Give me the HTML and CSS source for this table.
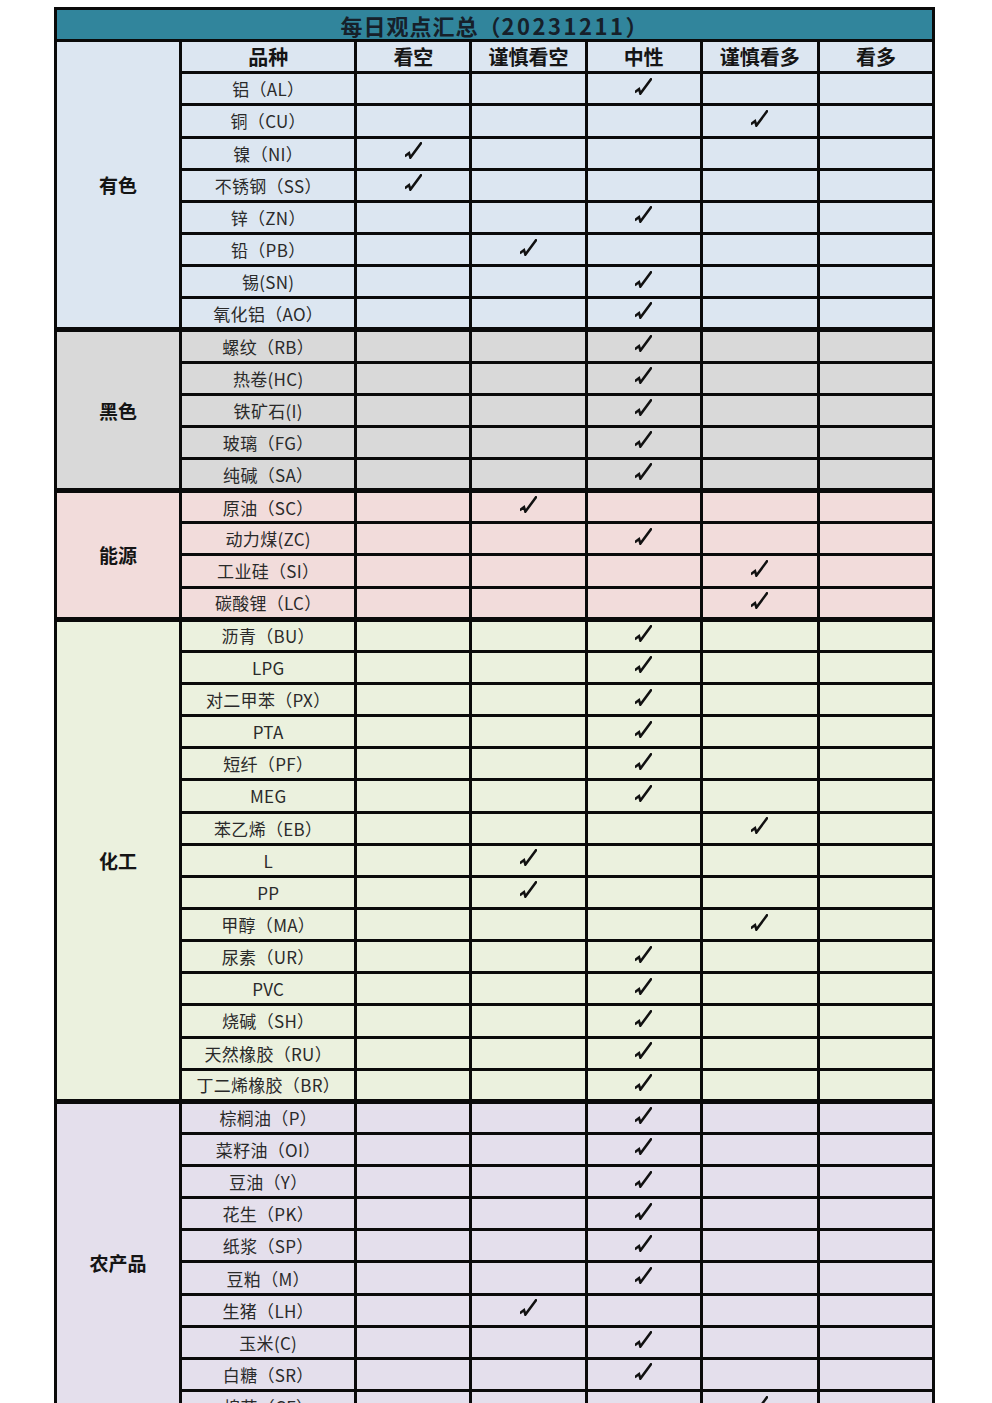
FILE: index.html
```html
<!DOCTYPE html>
<html lang="zh-CN">
<head>
<meta charset="utf-8">
<title>每日观点汇总</title>
<link rel="stylesheet" href="styles.css">
</head>
<body>
<svg class="defs" width="0" height="0" aria-hidden="true">
  <symbol id="tick" viewBox="0 0 17 17">
    <path d="M0.8 13.4 L4 11 L5.4 15.6 L16 1.2" fill="none" stroke="#111" stroke-width="2.5" stroke-linejoin="miter" stroke-linecap="square"/>
  </symbol>
</svg>
<div class="page">
<table class="sheet">
  <colgroup>
    <col class="c-group"><col class="c-name"><col class="c-v"><col class="c-v"><col class="c-v"><col class="c-v2"><col class="c-v">
  </colgroup>
  <tr class="title-row"><td colspan="7" class="title">每日观点汇总（<span class="date">20231211</span>）</td></tr>
  <tr class="head metal">
    <td rowspan="9" class="group">有色</td>
    <td class="th">品种</td><td class="th">看空</td><td class="th">谨慎看空</td><td class="th">中性</td><td class="th">谨慎看多</td><td class="th">看多</td>
  </tr>
  <tr class="metal"><td class="name">铝（AL）</td><td></td><td></td><td class="ck"><svg class="tk"><use href="#tick"/></svg></td><td></td><td></td></tr>
  <tr class="metal"><td class="name">铜（CU）</td><td></td><td></td><td></td><td class="ck"><svg class="tk"><use href="#tick"/></svg></td><td></td></tr>
  <tr class="metal"><td class="name">镍（NI）</td><td class="ck"><svg class="tk"><use href="#tick"/></svg></td><td></td><td></td><td></td><td></td></tr>
  <tr class="metal"><td class="name">不锈钢（SS）</td><td class="ck"><svg class="tk"><use href="#tick"/></svg></td><td></td><td></td><td></td><td></td></tr>
  <tr class="metal"><td class="name">锌（ZN）</td><td></td><td></td><td class="ck"><svg class="tk"><use href="#tick"/></svg></td><td></td><td></td></tr>
  <tr class="metal"><td class="name">铅（PB）</td><td></td><td class="ck"><svg class="tk"><use href="#tick"/></svg></td><td></td><td></td><td></td></tr>
  <tr class="metal"><td class="name">锡(SN)</td><td></td><td></td><td class="ck"><svg class="tk"><use href="#tick"/></svg></td><td></td><td></td></tr>
  <tr class="metal"><td class="name">氧化铝（AO）</td><td></td><td></td><td class="ck"><svg class="tk"><use href="#tick"/></svg></td><td></td><td></td></tr>

  <tr class="ferrous first"><td rowspan="5" class="group">黑色</td><td class="name">螺纹（RB）</td><td></td><td></td><td class="ck"><svg class="tk"><use href="#tick"/></svg></td><td></td><td></td></tr>
  <tr class="ferrous"><td class="name">热卷(HC)</td><td></td><td></td><td class="ck"><svg class="tk"><use href="#tick"/></svg></td><td></td><td></td></tr>
  <tr class="ferrous"><td class="name">铁矿石(I)</td><td></td><td></td><td class="ck"><svg class="tk"><use href="#tick"/></svg></td><td></td><td></td></tr>
  <tr class="ferrous"><td class="name">玻璃（FG）</td><td></td><td></td><td class="ck"><svg class="tk"><use href="#tick"/></svg></td><td></td><td></td></tr>
  <tr class="ferrous"><td class="name">纯碱（SA）</td><td></td><td></td><td class="ck"><svg class="tk"><use href="#tick"/></svg></td><td></td><td></td></tr>

  <tr class="energy first"><td rowspan="4" class="group">能源</td><td class="name">原油（SC）</td><td></td><td class="ck"><svg class="tk"><use href="#tick"/></svg></td><td></td><td></td><td></td></tr>
  <tr class="energy"><td class="name">动力煤(ZC)</td><td></td><td></td><td class="ck"><svg class="tk"><use href="#tick"/></svg></td><td></td><td></td></tr>
  <tr class="energy"><td class="name">工业硅（SI）</td><td></td><td></td><td></td><td class="ck"><svg class="tk"><use href="#tick"/></svg></td><td></td></tr>
  <tr class="energy"><td class="name">碳酸锂（LC）</td><td></td><td></td><td></td><td class="ck"><svg class="tk"><use href="#tick"/></svg></td><td></td></tr>

  <tr class="chem first"><td rowspan="15" class="group">化工</td><td class="name">沥青（BU）</td><td></td><td></td><td class="ck"><svg class="tk"><use href="#tick"/></svg></td><td></td><td></td></tr>
  <tr class="chem"><td class="name">LPG</td><td></td><td></td><td class="ck"><svg class="tk"><use href="#tick"/></svg></td><td></td><td></td></tr>
  <tr class="chem"><td class="name">对二甲苯（PX）</td><td></td><td></td><td class="ck"><svg class="tk"><use href="#tick"/></svg></td><td></td><td></td></tr>
  <tr class="chem"><td class="name">PTA</td><td></td><td></td><td class="ck"><svg class="tk"><use href="#tick"/></svg></td><td></td><td></td></tr>
  <tr class="chem"><td class="name">短纤（PF）</td><td></td><td></td><td class="ck"><svg class="tk"><use href="#tick"/></svg></td><td></td><td></td></tr>
  <tr class="chem"><td class="name">MEG</td><td></td><td></td><td class="ck"><svg class="tk"><use href="#tick"/></svg></td><td></td><td></td></tr>
  <tr class="chem"><td class="name">苯乙烯（EB）</td><td></td><td></td><td></td><td class="ck"><svg class="tk"><use href="#tick"/></svg></td><td></td></tr>
  <tr class="chem"><td class="name">L</td><td></td><td class="ck"><svg class="tk"><use href="#tick"/></svg></td><td></td><td></td><td></td></tr>
  <tr class="chem"><td class="name">PP</td><td></td><td class="ck"><svg class="tk"><use href="#tick"/></svg></td><td></td><td></td><td></td></tr>
  <tr class="chem"><td class="name">甲醇（MA）</td><td></td><td></td><td></td><td class="ck"><svg class="tk"><use href="#tick"/></svg></td><td></td></tr>
  <tr class="chem"><td class="name">尿素（UR）</td><td></td><td></td><td class="ck"><svg class="tk"><use href="#tick"/></svg></td><td></td><td></td></tr>
  <tr class="chem"><td class="name">PVC</td><td></td><td></td><td class="ck"><svg class="tk"><use href="#tick"/></svg></td><td></td><td></td></tr>
  <tr class="chem"><td class="name">烧碱（SH）</td><td></td><td></td><td class="ck"><svg class="tk"><use href="#tick"/></svg></td><td></td><td></td></tr>
  <tr class="chem"><td class="name">天然橡胶（RU）</td><td></td><td></td><td class="ck"><svg class="tk"><use href="#tick"/></svg></td><td></td><td></td></tr>
  <tr class="chem"><td class="name">丁二烯橡胶（BR）</td><td></td><td></td><td class="ck"><svg class="tk"><use href="#tick"/></svg></td><td></td><td></td></tr>

  <tr class="agri first"><td rowspan="10" class="group">农产品</td><td class="name">棕榈油（P）</td><td></td><td></td><td class="ck"><svg class="tk"><use href="#tick"/></svg></td><td></td><td></td></tr>
  <tr class="agri"><td class="name">菜籽油（OI）</td><td></td><td></td><td class="ck"><svg class="tk"><use href="#tick"/></svg></td><td></td><td></td></tr>
  <tr class="agri"><td class="name">豆油（Y）</td><td></td><td></td><td class="ck"><svg class="tk"><use href="#tick"/></svg></td><td></td><td></td></tr>
  <tr class="agri"><td class="name">花生（PK）</td><td></td><td></td><td class="ck"><svg class="tk"><use href="#tick"/></svg></td><td></td><td></td></tr>
  <tr class="agri"><td class="name">纸浆（SP）</td><td></td><td></td><td class="ck"><svg class="tk"><use href="#tick"/></svg></td><td></td><td></td></tr>
  <tr class="agri"><td class="name">豆粕（M）</td><td></td><td></td><td class="ck"><svg class="tk"><use href="#tick"/></svg></td><td></td><td></td></tr>
  <tr class="agri"><td class="name">生猪（LH）</td><td></td><td class="ck"><svg class="tk"><use href="#tick"/></svg></td><td></td><td></td><td></td></tr>
  <tr class="agri"><td class="name">玉米(C)</td><td></td><td></td><td class="ck"><svg class="tk"><use href="#tick"/></svg></td><td></td><td></td></tr>
  <tr class="agri"><td class="name">白糖（SR）</td><td></td><td></td><td class="ck"><svg class="tk"><use href="#tick"/></svg></td><td></td><td></td></tr>
  <tr class="agri"><td class="name">棉花（CF）</td><td></td><td></td><td></td><td class="ck"><svg class="tk"><use href="#tick"/></svg></td><td></td></tr>
</table>
</div>
</body>
</html>
```
FILE: styles.css
```css
html, body {
  margin: 0;
  padding: 0;
  background: #ffffff;
}
.defs {
  position: absolute;
  width: 0;
  height: 0;
  overflow: hidden;
}
.page {
  padding: 7px 0 0 54px;
}
.sheet {
  border-collapse: collapse;
  table-layout: fixed;
  width: 881px;
  font-family: "Noto Sans CJK SC", "Noto Sans", sans-serif;
  color: #1b1b1b;
}
.c-group { width: 125px; }
.c-name { width: 175px; }
.c-v { width: 115px; }
.c-v2 { width: 117px; }
.sheet td {
  border: 3px solid #0a0a0a;
  padding: 0;
  text-align: center;
  vertical-align: middle;
  line-height: 1;
}
.sheet tr {
  height: 32.15px;
}
.title {
  background: #31859c;
  font-size: 22px;
  font-weight: 700;
  color: #16202a;
  letter-spacing: 1px;
  padding-left: 8px;
}
.date {
  letter-spacing: 2.5px;
}
.th {
  font-size: 20px;
  font-weight: 700;
  color: #151515;
}
.group {
  font-size: 19px;
  font-weight: 700;
  color: #151515;
}
.name {
  font-size: 17px;
  font-weight: 400;
  color: #2a2a2a;
  letter-spacing: 0.3px;
}
.first td {
  border-top-width: 5px;
}
.ck {
  line-height: 0;
}
.tk {
  display: inline-block;
  width: 17px;
  height: 17px;
  margin-bottom: 4px;
}
.metal td { background: #dce6f1; }
.ferrous td { background: #d9d9d9; }
.energy td { background: #f2dcdb; }
.chem td { background: #ebf1de; }
.agri td { background: #e4dfec; }
```
